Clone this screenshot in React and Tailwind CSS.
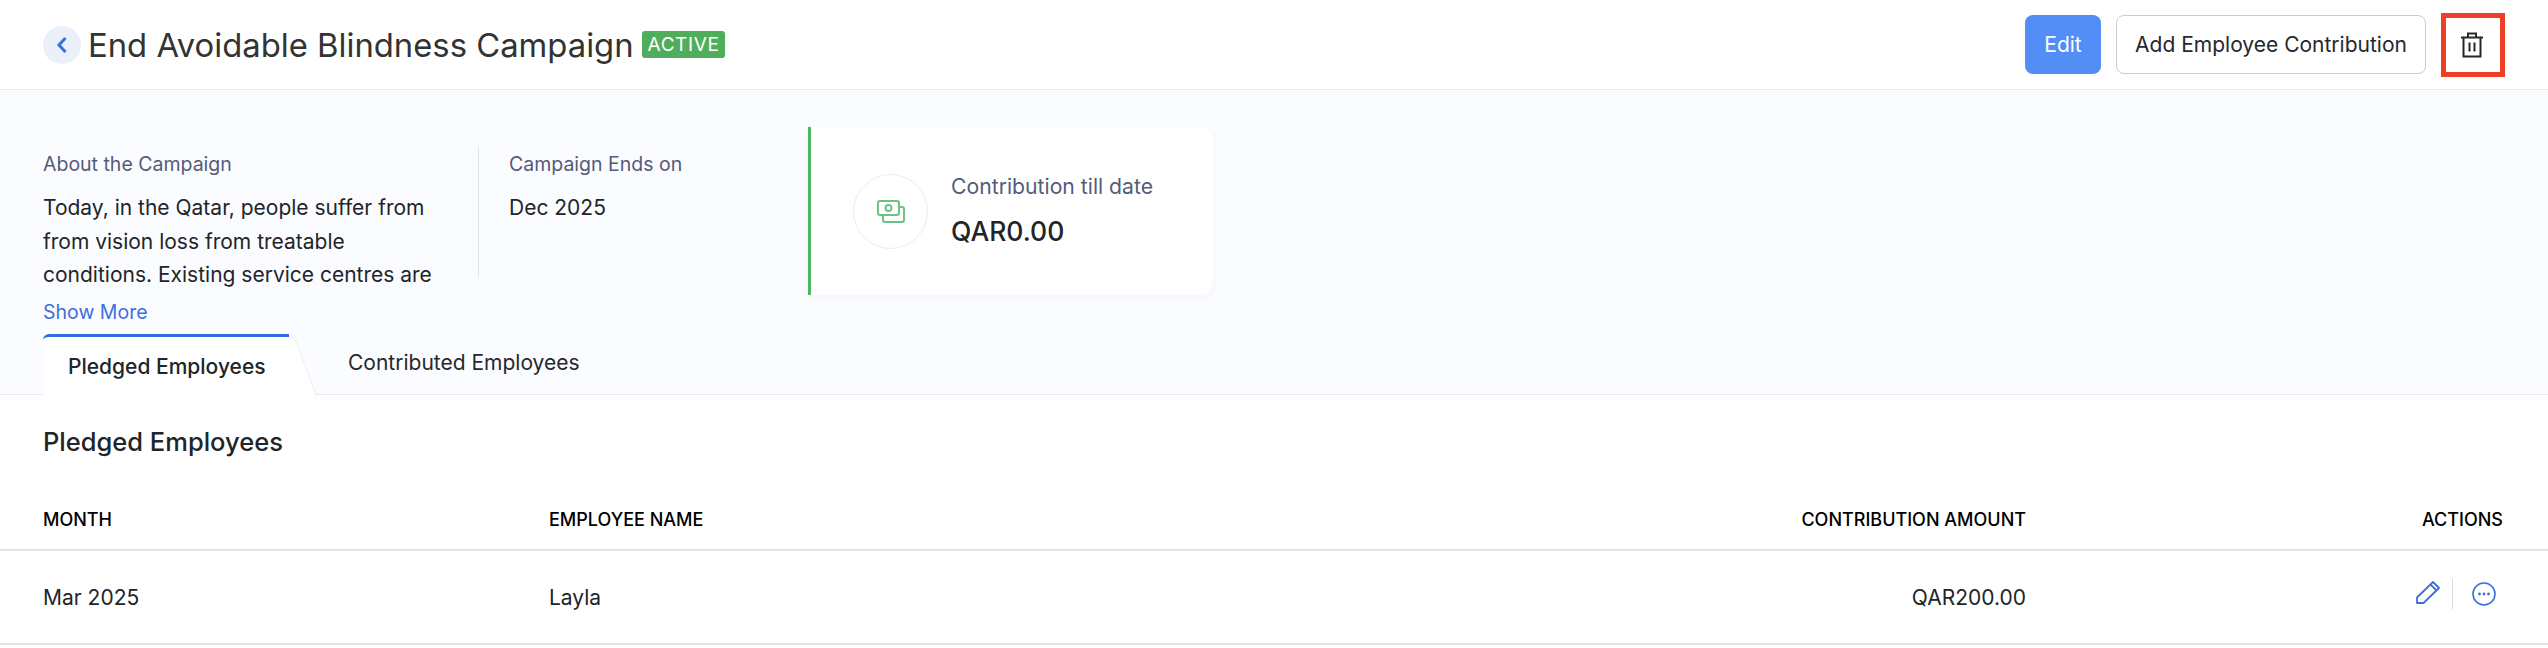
import React from "react";

function Trash() {
  return (
    <svg width="24" height="26" viewBox="0 0 24 26" fill="none" stroke="#26282d" strokeWidth="2">
      <path d="M1 5.5h22" />
      <path d="M8 5V1.5h8V5" />
      <path d="M3.5 5.5V24.5h17V5.5" />
      <path d="M9.5 10.5v9M14.5 10.5v9" />
    </svg>
  );
}

function Money() {
  return (
    <svg width="28" height="23" viewBox="0 0 28 23" fill="none" stroke="#6cc283" strokeWidth="2">
      <rect x="1" y="1" width="21" height="14" rx="2" />
      <circle cx="11.5" cy="8" r="3" />
      <path d="M23 7h2a2 2 0 0 1 2 2v11a2 2 0 0 1-2 2H8a2 2 0 0 1-2-2v-5" />
    </svg>
  );
}

function Pencil() {
  return (
    <svg width="24" height="24" viewBox="0 0 24 24" fill="none" stroke="#3b6fdc" strokeWidth="1.8" strokeLinejoin="round">
      <path d="M1 17.5 17 2l6 6L7.5 23H1z" />
      <path d="M14.5 4.5l6 6" />
    </svg>
  );
}

function More() {
  return (
    <svg width="24" height="24" viewBox="0 0 24 24" fill="none">
      <circle cx="12" cy="12" r="11" stroke="#3b6fdc" strokeWidth="1.6" />
      <circle cx="7.5" cy="12" r="1.4" fill="#3b6fdc" />
      <circle cx="12" cy="12" r="1.4" fill="#3b6fdc" />
      <circle cx="16.5" cy="12" r="1.4" fill="#3b6fdc" />
    </svg>
  );
}

export default function App() {
  return (
    <div className="w-[2548px] h-[648px] overflow-hidden bg-white font-['Inter',sans-serif] text-[#212529]">
      <header className="h-[90px] flex items-center justify-between pl-[43px] pr-[43px] border-b border-[#e9ebf0]">
        <div className="flex items-center">
          <button className="w-[38px] h-[38px] rounded-full bg-[#e9f0fa] flex items-center justify-center">
            <svg width="12" height="18" viewBox="0 0 12 18" fill="none" stroke="#3b6fdc" strokeWidth="3">
              <path d="M9.5 2 3 9l6.5 7" />
            </svg>
          </button>
          <h1 className="ml-[7px] text-[32.8px] leading-[40px] text-[#333333]">End Avoidable Blindness Campaign</h1>
          <span className="ml-[8px] h-[27px] px-[6px] rounded-[3px] bg-[#4fae5c] text-white text-[19px] leading-[27px] tracking-[0.6px]">ACTIVE</span>
        </div>
        <div className="flex items-center">
          <button className="w-[76px] h-[59px] rounded-[8px] bg-[#528ef5] text-white text-[21px]">Edit</button>
          <button className="ml-[15px] w-[310px] h-[59px] rounded-[8px] border border-[#cccccc] bg-white text-[21px] text-[#26282d]">Add Employee Contribution</button>
          <button className="ml-[15px] w-[64px] h-[64px] border-[5px] border-[#ee4027] flex items-center justify-center pr-[2px]">
            <Trash />
          </button>
        </div>
      </header>

      <section className="h-[305px] bg-[#fbfcff] border-b border-[#e9ebf0] flex flex-col">
        <div className="h-[244px] shrink-0 flex pl-[43px]">
          <div className="w-[435px] pt-[60px] pr-[30px]">
            <div className="text-[19.5px] leading-[28px] text-[#545b7a]">About the Campaign</div>
            <p className="mt-[13px] text-[21px] leading-[33.5px]">Today, in the Qatar, people suffer from from vision loss from treatable conditions. Existing service centres are</p>
            <div className="mt-[6px] text-[19.5px] leading-[28px] text-[#3b6fdc]">Show More</div>
          </div>
          <div className="w-[330px] h-[130px] mt-[57px] border-l border-[#dfe1e6] pl-[30px] flex flex-col">
            <div className="text-[19.5px] leading-[28px] text-[#545b7a] pt-[3px]">Campaign Ends on</div>
            <div className="mt-[13px] text-[21px] leading-[33.5px]">Dec 2025</div>
          </div>
          <div className="mt-[37px] w-[405px] h-[168px] bg-white rounded-r-[12px] border-l-[3px] border-[#4fb562] shadow-[0_2px_8px_rgba(80,90,140,0.05)] flex items-center pl-[42px]">
            <div className="w-[75px] h-[75px] rounded-full border border-[#ebecee] flex items-center justify-center">
              <Money />
            </div>
            <div className="ml-[23px] pb-[4px]">
              <div className="text-[21.2px] leading-[30px] text-[#545b7a]">Contribution till date</div>
              <div className="mt-[13px] text-[26.5px] leading-[34px] font-medium">QAR0.00</div>
            </div>
          </div>
        </div>
        <div className="flex-1 flex pl-[43px]">
          <div className="relative w-[246px] h-[62px] bg-white border-t-[3px] border-[#2f6ce0] rounded-tl-[6px] pl-[25px] pt-[15px] text-[21px] leading-[30px] font-medium">
            Pledged Employees
            <svg className="absolute left-full top-[-3px]" width="30" height="64" viewBox="0 0 30 64">
              <path d="M0 3 C4 3 7 6 8 10 L28 64 H0z" fill="#ffffff" />
              <path d="M0 3 C4 3 7 6 8 10 L28 64" fill="none" stroke="#eceef3" strokeWidth="1" />
            </svg>
          </div>
          <div className="ml-[59px] pt-[14px] text-[21px] leading-[30px] text-[#26282d]">Contributed Employees</div>
        </div>
      </section>

      <div className="pl-[43px] pt-[29px] text-[25.5px] leading-[36px] font-medium h-[94px]">Pledged Employees</div>

      <div className="grid grid-cols-[506px_1fr_300px_477px] items-center h-[62px] pl-[43px] pr-[45px] border-b-2 border-[#e2e3e6] text-[18px] font-medium text-black">
        <div>MONTH</div>
        <div>EMPLOYEE NAME</div>
        <div className="text-right">CONTRIBUTION AMOUNT</div>
        <div className="text-right">ACTIONS</div>
      </div>
      <div className="grid grid-cols-[506px_1fr_300px_477px] items-center h-[94px] pl-[43px] pr-[45px] pt-[2px] border-b-2 border-[#e2e3e6] text-[21px]">
        <div>Mar 2025</div>
        <div>Layla</div>
        <div className="text-right">QAR200.00</div>
        <div className="flex items-center justify-end pb-[8px]">
          <div className="mb-[4px]"><Pencil /></div>
          <div className="w-px h-[30px] bg-[#d9dbe8] ml-[12px] mr-[19px]" />
          <More />
          <div className="w-[7px]" />
        </div>
      </div>
    </div>
  );
}
